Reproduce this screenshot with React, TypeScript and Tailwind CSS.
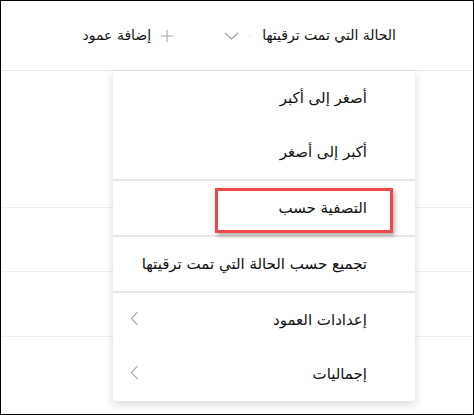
import React from "react";

const font = { fontFamily: '"DejaVu Sans", "Noto Sans", sans-serif' };

function Chevron() {
  return (
    <svg width="9" height="15" viewBox="0 0 9 15" fill="none">
      <path d="M7.5 1 L1.5 7.5 L7.5 14" stroke="#9a9a9a" strokeWidth="1.1" />
    </svg>
  );
}

function Item({ label, sub }: { label: string; sub?: boolean }) {
  return (
    <div className="relative flex h-[54px] items-center pr-[48px] text-[15px] text-[#111]">
      <span>{label}</span>
      {sub && (
        <span className="absolute left-[17px] top-[18px]">
          <Chevron />
        </span>
      )}
    </div>
  );
}

export default function App() {
  return (
    <div
      dir="rtl"
      style={font}
      className="relative h-[415px] w-[474px] overflow-hidden border border-black bg-white"
    >
      <div className="flex h-[70px] items-center border-b border-[#e6e6e6] pr-[77px] text-[14px] text-[#111]">
        <span>الحالة التي تمت ترقيتها</span>
        <span className="mr-[12px] h-[1px] w-[1px] bg-[#d0d0d0]" />
        <svg className="mr-[10px]" width="15" height="8" viewBox="0 0 15 8" fill="none">
          <path d="M1 1 L7.5 7 L14 1" stroke="#9a9a9a" strokeWidth="1.1" />
        </svg>
        <svg className="mr-[51px]" width="12" height="12" viewBox="0 0 12 12" fill="none">
          <path d="M6 0 V12 M0 6 H12" stroke="#a8a8a8" strokeWidth="1.1" />
        </svg>
        <span className="mr-[10px]">إضافة عمود</span>
      </div>
      <div className="h-[137px] border-b border-[#f0f0f0]" />
      <div className="h-[64px] border-b border-[#f0f0f0]" />
      <div className="h-[65px] border-b border-[#f0f0f0]" />

      <div className="absolute left-[112px] top-[70px] w-[302px] rounded-b-[3px] bg-white shadow-[0_3px_10px_rgba(0,0,0,0.16)]">
        <div>
          <Item label="أصغر إلى أكبر" />
          <Item label="أكبر إلى أصغر" />
        </div>
        <div className="border-t-2 border-[#e6e6e6]">
          <Item label="التصفية حسب" />
        </div>
        <div className="border-t-2 border-[#e6e6e6]">
          <Item label="تجميع حسب الحالة التي تمت ترقيتها" />
        </div>
        <div className="border-t-2 border-[#e6e6e6]">
          <Item label="إعدادات العمود" sub />
          <Item label="إجماليات" sub />
        </div>
        <div className="absolute left-[102px] top-[117px] h-[45px] w-[178px] border-[3px] border-[#f04848] shadow-[2px_3px_4px_rgba(0,0,0,0.3)]" />
      </div>
    </div>
  );
}
